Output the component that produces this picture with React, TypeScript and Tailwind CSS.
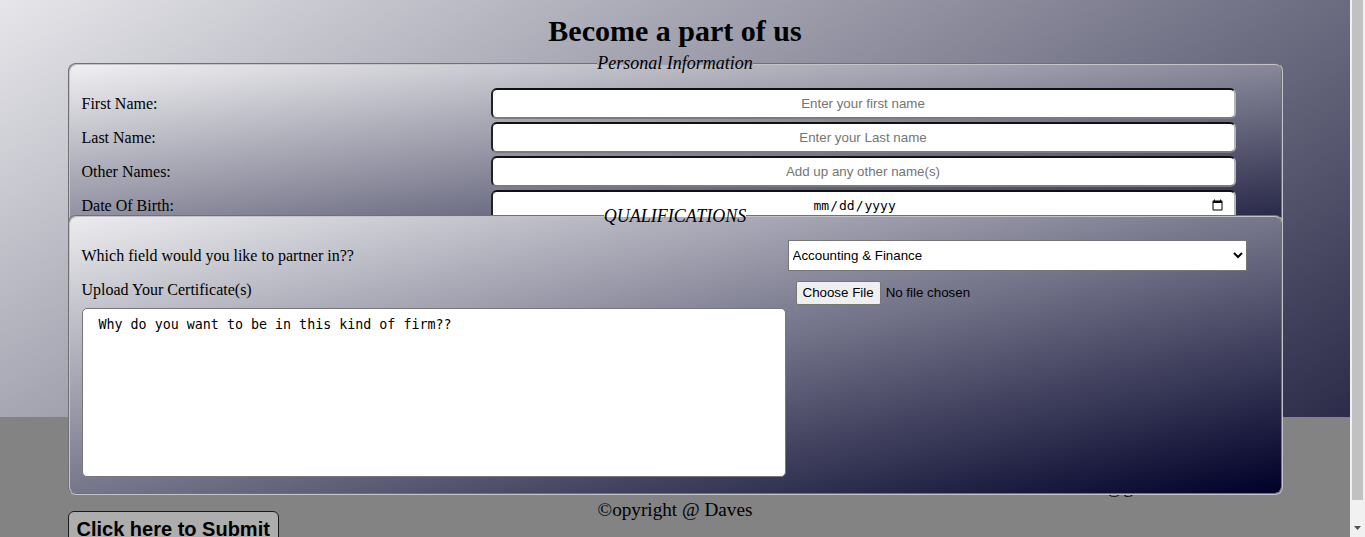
import type { ChangeEvent } from 'react'
import { useState } from 'react'

const serif = "font-['Liberation_Serif','Times_New_Roman',serif]"
const sans = "font-['Liberation_Sans',Arial,sans-serif]"

interface Field {
  label: string
  placeholder?: string
  type?: string
}

const PERSONAL: Field[] = [
  { label: 'First Name:', placeholder: 'Enter your first name' },
  { label: 'Last Name:', placeholder: 'Enter your Last name' },
  { label: 'Other Names:', placeholder: 'Add up any other name(s)' },
  { label: 'Date Of Birth:', type: 'date' },
]

const FIELDS = [
  'Accounting & Finance',
  'Law & Legal Services',
  'Engineering',
  'Information Technology',
  'Health Care',
]

// the page's own scroll bar, as the browser drew it in the reference
function ScrollBar() {
  return (
    <aside className="flex h-[537px] w-[15px] shrink-0 flex-col self-start bg-[#f1f1f1]">
      <div className="mx-[2px] h-[500px] bg-[#c1c1c1]" />
      <svg
        width="15"
        height="15"
        viewBox="0 0 15 15"
        className="mt-auto mb-[2px]"
      >
        <path d="M4 6h7l-3.5 4z" fill="#505050" />
      </svg>
    </aside>
  )
}

export default function App() {
  const [field, setField] = useState(FIELDS[0])
  const [why, setWhy] = useState('Why do you want to be in this kind of firm??')

  return (
    <div className={`${serif} flex text-black`}>
      <main className="min-w-0 flex-1">
        <section className="h-[417px] bg-[linear-gradient(149deg,#e6e6ea,#2c2c4a)] pt-[14px]">
          <h1 className="mb-[5px] text-center text-[30px] leading-[34px] font-bold">
            Become a part of us
          </h1>

          <form className="mx-[5%]" onSubmit={(e) => e.preventDefault()}>
            <fieldset className="relative rounded-[8px] border-2 border-[#c4c4c8] [border-style:groove] bg-[linear-gradient(to_bottom_right,#f0f0f2,#1e1e40)] px-3 pt-[14px] pb-[12px]">
              <legend className="mx-auto text-[18px] leading-[21px] italic">
                Personal Information
              </legend>
              <div className="grid grid-cols-[409px_745px] gap-y-[3px]">
                {PERSONAL.map((f) => (
                  <div key={f.label} className="contents">
                    <label className="flex h-[31px] items-center text-[16px]">
                      {f.label}
                    </label>
                    <input
                      type={f.type ?? 'text'}
                      placeholder={f.placeholder}
                      className={`h-[31px] rounded-[6px] border-2 border-t-[#111] border-r-[#b4b4b8] border-b-[#7a7a80] border-l-[#222] bg-white text-[13.33px] placeholder:text-[#757575] ${
                        f.type === 'date'
                          ? "pr-2 pl-[320px] font-['DejaVu_Sans_Mono',monospace] text-[13px]"
                          : `${sans} px-2 text-center`
                      }`}
                    />
                  </div>
                ))}
              </div>
            </fieldset>

            <fieldset className="relative z-10 -mt-[29px] rounded-[8px] border-2 border-[#c4c4c8] [border-style:groove] bg-[linear-gradient(to_bottom_right,#ececef,#000028)] px-3 pt-[14px] pb-[16px]">
              <legend className="mx-auto text-[18px] leading-[20px] italic">
                QUALIFICATIONS
              </legend>

              <div className="flex h-[31px] items-center">
                <label className="w-[706px] text-[16px]">
                  Which field would you like to partner in??
                </label>
                <select
                  value={field}
                  onChange={(e: ChangeEvent<HTMLSelectElement>) =>
                    setField(e.target.value)
                  }
                  className={`${sans} h-[31px] w-[459px] border border-[#767676] bg-white text-[13.33px]`}
                >
                  {FIELDS.map((f) => (
                    <option key={f}>{f}</option>
                  ))}
                </select>
              </div>

              <div className="mt-[9px] flex h-[22px] items-start">
                <label className="w-[706px] text-[16px] leading-[19px]">
                  Upload Your Certificate(s)
                </label>
                <input
                  type="file"
                  className={`${sans} mt-[1px] ml-2 text-[13.33px] file:mr-[5px] file:rounded-[2px] file:border file:border-[#767676] file:bg-[#efefef] file:px-[6px] file:py-[1px] file:text-[13.33px] file:text-black`}
                />
              </div>

              <textarea
                value={why}
                onChange={(e) => setWhy(e.target.value)}
                className="mt-[6px] block h-[169px] w-[704px] resize-none rounded-[5px] border border-[#767676] bg-white pt-[6px] pl-[16px] font-['DejaVu_Sans_Mono',monospace] text-[13.33px]"
              />
            </fieldset>

            <button
              type="submit"
              className={`${sans} mt-[16px] rounded-[6px] border border-[#1a1a1a] bg-[#adadad] px-[8px] pt-[6px] pb-[4px] text-[20px] leading-[23px] font-bold`}
            >
              Click here to Submit
            </button>
          </form>
        </section>

        <footer className="h-[294px] bg-[#838383] pt-[58px] text-[19.2px] leading-[23px]">
          <p className="pl-[1029px]">davesfirm@gmail.com</p>
          <p className="text-center">©opyright @ Daves</p>
        </footer>
      </main>
      <ScrollBar />
    </div>
  )
}
